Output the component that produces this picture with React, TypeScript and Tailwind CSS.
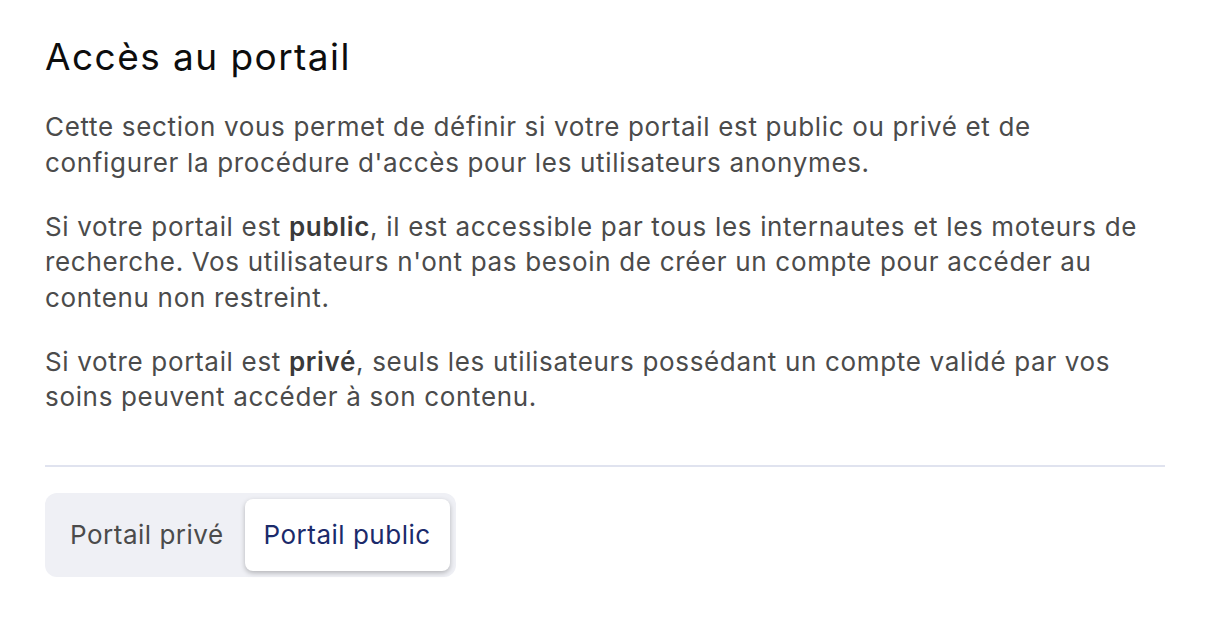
import React from "react";

export default function App() {
  return (
    <div className="min-h-screen bg-white" style={{ fontFamily: "Inter, 'Noto Sans', sans-serif" }}>
      <div className="w-[1120px] ml-[45px] pt-[35px]">
        <h1 className="text-[37px] leading-[44px] tracking-[1.45px] text-[#0d0d0d] font-normal">Accès au portail</h1>
        <div className="mt-[30px] text-[26px] leading-[35.5px] tracking-[0.67px] text-[#4b4b4b] flex flex-col gap-[28.5px]">
          <p>
            Cette section vous permet de définir si votre portail est public ou privé et de
            <br />
            configurer la procédure d'accès pour les utilisateurs anonymes.
          </p>
          <p>
            Si votre portail est <strong className="font-semibold text-[#3a3a3a]">public</strong>, il est accessible par tous
            les internautes et les moteurs de
            <br />
            recherche. Vos utilisateurs n'ont pas besoin de créer un compte pour accéder au
            <br />
            contenu non restreint.
          </p>
          <p>
            Si votre portail est <strong className="font-semibold text-[#3a3a3a]">privé</strong>, seuls les utilisateurs
            possédant un compte validé par vos
            <br />
            soins peuvent accéder à son contenu.
          </p>
        </div>
        <div className="mt-[50px] h-[2px] bg-[#e0e3ef]" />
        <div className="mt-[26px] inline-flex items-stretch rounded-[12px] bg-[#eff0f5] p-[6px] h-[84px]">
          <button className="pl-[19px] pr-[21px] text-[26px] tracking-[0.5px] text-[#4b4b4b]">Portail privé</button>
          <button className="px-[19px] text-[26px] tracking-[0.5px] text-[#1b2a6b] bg-white rounded-[8px] shadow-[0_2px_5px_rgba(0,0,0,0.25)]">
            Portail public
          </button>
        </div>
      </div>
    </div>
  );
}
